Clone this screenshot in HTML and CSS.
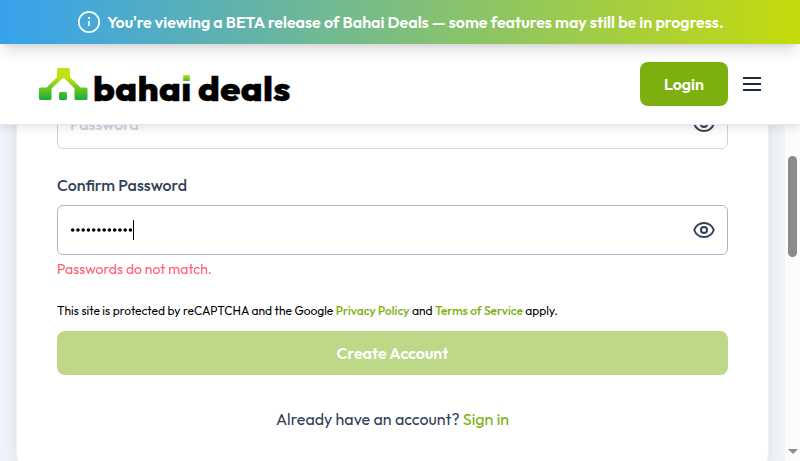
FILE: index.html
```html
<!DOCTYPE html>
<html lang="en">
<head>
<meta charset="utf-8">
<title>Bahai Deals</title>
<link rel="stylesheet" href="styles.css">
</head>
<body>
<div class="banner">
  <svg class="info" viewBox="0 0 24 24" fill="none" stroke="currentColor" stroke-width="1.7"><circle cx="12" cy="12" r="10.2"/><path d="M12 11v5M12 7v2"/></svg>
  <span class="banner-text">You're viewing a BETA release of Bahai Deals — some features may still be in progress.</span>
</div>
<header class="header">
  <a class="brand">
    <svg class="mark" viewBox="0 0 50 34">
      <defs><linearGradient id="g" x1="0" y1="0" x2="0" y2="1"><stop offset="0" stop-color="#b5e61d"/><stop offset=".3" stop-color="#c3e00f"/><stop offset=".65" stop-color="#69c71e"/><stop offset="1" stop-color="#16ad3e"/></linearGradient></defs>
      <path fill="url(#g)" d="M19.500 0h10q1.500 0 1.500 1.500v7.800L41.500 19.500h5.500q1.500 0 1.500 1.500v9.500q0 1.500-1.500 1.500h-10q-1.500 0-1.500-1.500V20.500L26.200 11q-1.700-1.700-3.400 0L12.500 20.500v10q0 1.500-1.500 1.500h-9.500Q0 32 0 30.500V21q0-1.500 1.500-1.500h6L18 9.300V1.500Q18 0 19.500 0zM21.500 24h5q1.500 0 1.500 1.500v5q0 1.500-1.500 1.500h-5q-1.500 0-1.500-1.500v-5q0-1.500 1.500-1.500z"/>
    </svg>
    <span class="wordmark"><span class="bahai">baha<span class="letter-i">ı</span></span><span class="deals">deals</span></span>
  </a>
  <button class="login"><span>Login</span></button>
  <svg class="menu" viewBox="0 0 18 14" stroke="currentColor" stroke-width="2"><path d="M0 1h18M0 7h18M0 13h18"/></svg>
</header>
<div class="viewport">
  <main class="page">
    <section class="card">
      <div class="field"><span class="placeholder">Password</span>
        <svg class="eye" viewBox="0 0 24 24" fill="none" stroke="currentColor" stroke-width="2"><path d="M2.200 12C4 7.500 7.600 5 12 5s8 2.500 9.800 7c-1.800 4.500-5.400 7-9.800 7s-8-2.500-9.800-7z"/><circle cx="12" cy="12" r="3"/></svg>
      </div>
      <div class="label"><span>Confirm Password</span></div>
      <div class="field active"><svg class="dots" viewBox="0 0 63 6"><path d="M2.700 3H62" stroke="#000" stroke-width="3.600" stroke-linecap="round" stroke-dasharray="0 5.250"/></svg><span class="caret"></span>
        <svg class="eye" viewBox="0 0 24 24" fill="none" stroke="currentColor" stroke-width="2"><path d="M2.200 12C4 7.500 7.600 5 12 5s8 2.500 9.800 7c-1.800 4.500-5.400 7-9.800 7s-8-2.500-9.800-7z"/><circle cx="12" cy="12" r="3"/></svg>
      </div>
      <p class="error">Passwords do not match.</p>
      <p class="legal">This site is protected by reCAPTCHA and the Google <a>Privacy Policy</a> and <a>Terms of Service</a> apply.</p>
      <button class="create"><span>Create Account</span></button>
      <p class="signin">Already have an account? <a>Sign in</a></p>
    </section>
  </main>
  <div class="scrollbar"><div class="thumb"></div><div class="arrow"></div></div>
</div>
</body>
</html>
```
FILE: styles.css
```css
* { box-sizing: border-box; }
body {
  margin: 0;
  height: 461px;
  display: flex;
  flex-direction: column;
  overflow: hidden;
  background: #fff;
  font-family: Outfit, Lato, sans-serif;
  font-size: 16px;
  color: #314158;
  white-space: nowrap;
}
p { margin: 0; }
a { color: #7ab00c; }
svg { display: block; flex: none; }
button { border: 0; font: inherit; padding: 0; }

.banner {
  flex: none;
  height: 44px;
  display: flex;
  align-items: center;
  padding-left: 77px;
  gap: 6px;
  color: #fff;
  font-weight: 600;
  background: linear-gradient(90deg, #36a2ef, #c5db0c);
  box-shadow: 0 10px 15px -3px rgba(0,0,0,.12), 0 4px 6px -4px rgba(0,0,0,.12);
  z-index: 3;
}
.info { width: 24px; height: 24px; }

.header {
  flex: none;
  height: 81px;
  display: flex;
  align-items: center;
  padding: 0 39px;
  background: #fff;
  border-bottom: 1px solid #e2e8f0;
  box-shadow: 0 4px 8px rgba(0,0,0,.09);
  z-index: 2;
}
.brand { display: flex; margin-right: auto; color: #000; }
.mark { width: 50px; height: 34px; margin-top: 6px; }
.wordmark {
  display: flex;
  margin: 9px 0 0 4px;
  font-size: 33px;
  line-height: 36px;
  font-weight: 800;
  -webkit-text-stroke: .4px #000;
  letter-spacing: .3px;
  gap: 6px;
  transform: scaleX(1.1);
  transform-origin: left;
}
.letter-i { position: relative; }
.letter-i::before {
  content: "";
  position: absolute;
  left: 1.5px;
  top: 7px;
  width: 6px;
  height: 6px;
  background: linear-gradient(#c3e00f, #3db838);
}
.login {
  width: 88px;
  height: 44px;
  border-radius: 8px;
  background: #7cb00e;
  color: #fff;
  font-weight: 600;
}
.menu { width: 18px; height: 14px; margin-left: 15px; color: #1d293d; }

.viewport { flex: 1; min-height: 0; display: flex; }
.page { width: 785px; padding: 0 16px; background: #f0f4f9; overflow: hidden; }
.card {
  height: 447px;
  margin-top: -102px;
  padding: 75px 40px 0;
  background: #fff;
  border: 1px solid #eef1f6;
  border-radius: 16px;
  box-shadow: 0 0 14px rgba(30,50,80,.1);
}
.field {
  height: 50px;
  display: flex;
  align-items: center;
  padding: 0 11px 0 12px;
  border: 1px solid #cad5e2;
  border-radius: 6px;
}
.field.active { border-color: #a9b5ca; }
.placeholder { color: #cad5e2; font-weight: 500; }
.eye { width: 24px; height: 24px; margin-left: auto; }
.label { height: 56px; padding-top: 24px; line-height: 24px; font-weight: 500; }
.dots { width: 63px; height: 6px; }
.caret { width: 1px; height: 20px; background: #000; }
.error { height: 44px; padding-top: 4px; font-size: 14px; line-height: 20px; color: #ff5f73; }
.legal { height: 32px; padding-top: 4px; font-size: 12px; line-height: 16px; color: #000; }
.legal a { font-weight: 500; }
.create {
  display: block;
  width: 100%;
  height: 44px;
  border-radius: 8px;
  background: #bdd887;
  color: #fff;
  font-weight: 600;
}
.signin { margin-top: 32px; line-height: 24px; text-align: center; }

.scrollbar {
  width: 15px;
  display: flex;
  flex-direction: column;
  align-items: center;
  justify-content: space-between;
  padding: 31px 0 7px;
  background: #fcfcfc;
}
.thumb { width: 9px; height: 101px; border-radius: 5px; background: #8b8b8b; }
.arrow { border: 5px solid transparent; border-top-color: #8b8b8b; border-bottom: 0; }
```
